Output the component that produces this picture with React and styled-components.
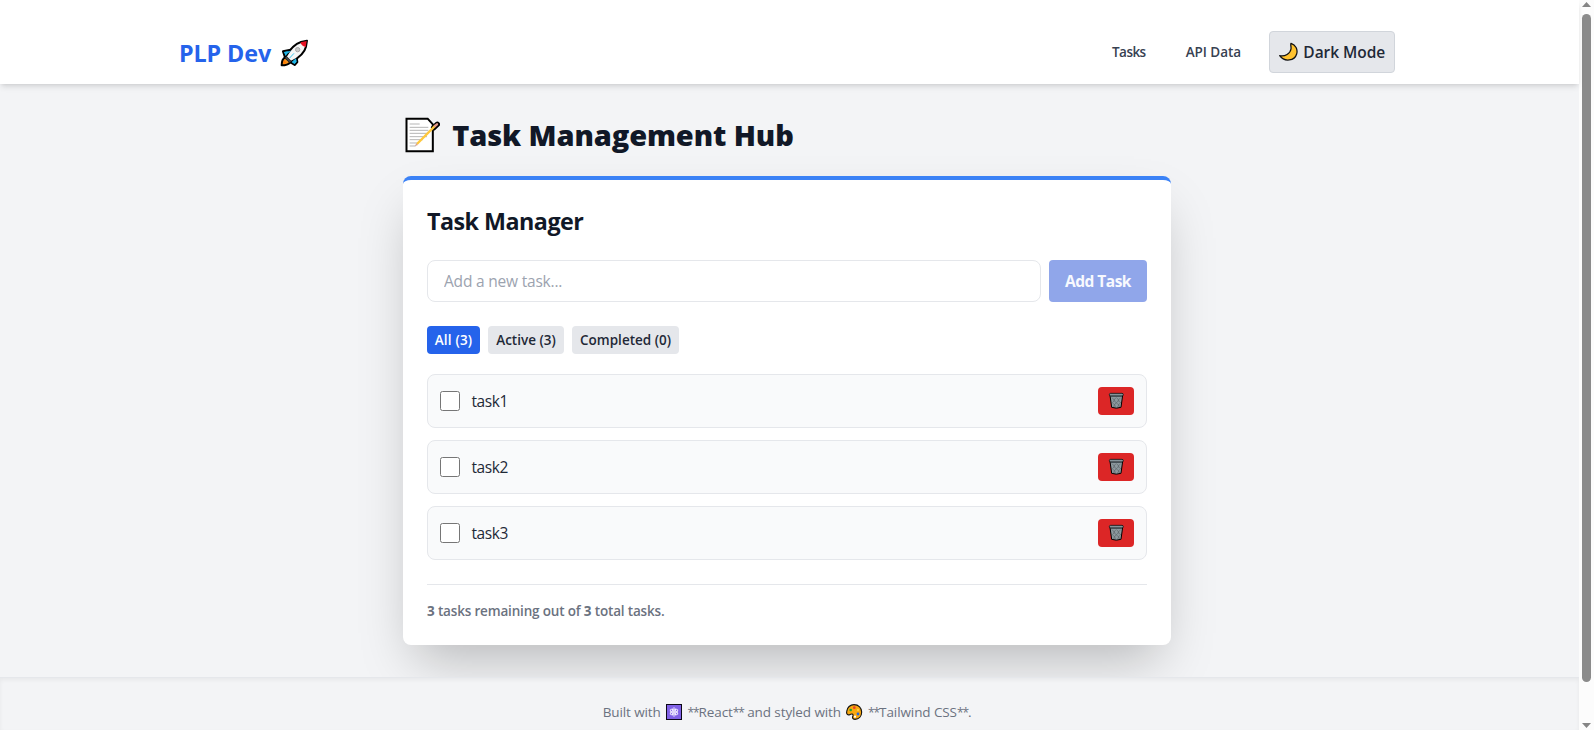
import React, { useState } from 'react';
import styled, { createGlobalStyle } from 'styled-components';

const GlobalStyle = createGlobalStyle`
  *, *::before, *::after { box-sizing: border-box; }
  body {
    margin: 0;
    background: #f3f4f6;
    color: #1f2937;
    font-family: "Segoe UI", "Open Sans", "Noto Sans", sans-serif;
    overflow: hidden;
  }
  h1, h2, p, ul { margin: 0; padding: 0; }
  button, input { font-family: inherit; }
`;

const Window = styled.div`
  display: flex;
  height: 730px;
  overflow: hidden;
`;

const Page = styled.div`
  flex: 1;
  min-width: 0;
  display: flex;
  flex-direction: column;
`;

const Header = styled.header`
  position: relative;
  flex: none;
  height: 84px;
  padding: 31px 5px 11px 0;
  background: #fff;
  box-shadow: 0 4px 6px -1px rgba(0, 0, 0, 0.1), 0 2px 4px -2px rgba(0, 0, 0, 0.1);
`;

const HeaderInner = styled.div`
  max-width: 1280px;
  margin: 0 auto;
  padding: 0 32px;
  display: flex;
  align-items: center;
  justify-content: space-between;
`;

const Logo = styled.div`
  display: flex;
  align-items: center;
  gap: 8.6px;
  padding-top: 2px;
  color: #2563eb;
  font-size: 23.3px;
  font-weight: 700;
  line-height: 32px;
  letter-spacing: -0.1px;
`;

const Nav = styled.nav`
  display: flex;
  align-items: center;
  gap: 16px;
`;

const NavLink = styled.a`
  padding: 0 12px;
  color: #374151;
  font-size: 13.5px;
  font-weight: 600;
  line-height: 20px;
  letter-spacing: ${(p) => p.$tracking || '0'};
  cursor: pointer;
`;

const ThemeButton = styled.button`
  display: flex;
  align-items: center;
  gap: 5px;
  width: 126px;
  height: 42px;
  padding: 0 0 0 8px;
  border: 1px solid #d1d5db;
  border-radius: 4px;
  background: #e5e7eb;
  color: #1f2937;
  font-size: 15.5px;
  font-weight: 600;
  line-height: 24px;
  letter-spacing: -0.05px;
  white-space: nowrap;
`;

const Main = styled.main`
  flex: none;
  padding: 32px 5px 32px 0;
`;

const Content = styled.div`
  width: 768px;
  margin: 0 auto;
`;

const PageTitle = styled.h1`
  display: flex;
  align-items: center;
  gap: 11.8px;
  height: 38px;
  margin: 0 0 22px 2px;
  color: #111827;
  font-size: 29px;
  font-weight: 800;
  line-height: 36px;
  letter-spacing: -0.1px;
`;

const Card = styled.section`
  padding: 24px;
  border-top: 4px solid #3b82f6;
  border-radius: 8px;
  background: #fff;
  box-shadow: 0 25px 50px -12px rgba(0, 0, 0, 0.25);
`;

const CardTitle = styled.h2`
  margin-bottom: 23px;
  padding-top: 1px;
  color: #111827;
  font-size: 23.3px;
  font-weight: 700;
  line-height: 32px;
  letter-spacing: -0.52px;
`;

const TaskForm = styled.form`
  display: flex;
  gap: 8px;
  margin-bottom: 24px;
`;

const TaskInput = styled.input`
  flex: 1;
  min-width: 0;
  height: 42px;
  padding: 0 16px;
  border: 1px solid #e5e7eb;
  border-radius: 8px;
  background: #fff;
  color: #1f2937;
  font-size: 15.5px;
  letter-spacing: -0.2px;
  &::placeholder { color: #9ca3af; }
`;

const AddButton = styled.button`
  width: 98px;
  height: 42px;
  padding: 0;
  border: 0;
  border-radius: 4px;
  background: #90a6ea;
  color: #f7f9fe;
  font-size: 15.5px;
  font-weight: 700;
  letter-spacing: -0.52px;
`;

const Filters = styled.div`
  display: flex;
  gap: 8px;
  margin-bottom: 20px;
`;

const FilterButton = styled.button`
  width: ${(p) => p.$width};
  height: 28px;
  padding: 0;
  border: 0;
  border-radius: 4px;
  background: ${(p) => (p.$active ? '#2563eb' : '#e5e7eb')};
  color: ${(p) => (p.$active ? '#fff' : '#1f2937')};
  font-size: 13.5px;
  font-weight: 600;
  line-height: 20px;
  letter-spacing: ${(p) => (p.$active ? '0.2px' : '0')};
  white-space: nowrap;
`;

const TaskList = styled.ul`
  display: flex;
  flex-direction: column;
  gap: 12px;
  list-style: none;
`;

const TaskRow = styled.li`
  display: flex;
  align-items: center;
  height: 54px;
  padding: 0 12px;
  border: 1px solid #e5e7eb;
  border-radius: 8px;
  background: #f9fafb;
`;

const Checkbox = styled.input`
  width: 20px;
  height: 20px;
  margin: 0 11.5px 0 0;
`;

const TaskName = styled.span`
  flex: 1;
  font-size: 15.5px;
  line-height: 24px;
  letter-spacing: -0.4px;
`;

const DeleteButton = styled.button`
  display: flex;
  align-items: center;
  justify-content: center;
  width: 36px;
  height: 28px;
  padding: 0;
  border: 0;
  border-radius: 4px;
  background: #dc2626;
`;

const Summary = styled.p`
  margin-top: 24px;
  padding-top: 16px;
  border-top: 1px solid #e5e7eb;
  color: #6b7280;
  font-size: 13.5px;
  font-weight: 600;
  line-height: 20px;
  letter-spacing: -0.17px;
`;

const Count = styled.b`
  font-weight: 700;
`;

const Footer = styled.footer`
  position: relative;
  flex: 1;
  display: flex;
  justify-content: center;
  align-items: flex-start;
  gap: 5.4px;
  padding: 24px 5px 0 0;
  border-top: 1px solid #e5e7eb;
  background: #f3f4f6;
  box-shadow: inset 0 2px 4px rgba(0, 0, 0, 0.05);
  color: #6b7280;
  font-size: 13.5px;
  line-height: 20px;
  white-space: nowrap;
`;

const FooterText = styled.span`
  letter-spacing: -0.1px;
`;

const Stars = styled.span`
  font-size: 12px;
  line-height: 1;
  letter-spacing: -1.1px;
`;

const FooterIcon = styled.span`
  display: flex;
  padding-top: 2px;
`;

const ScrollTrack = styled.div`
  flex: none;
  width: 15px;
  display: flex;
  flex-direction: column;
  align-items: center;
  padding: 2px 0;
  background: #fcfcfc;
`;

const ScrollThumb = styled.div`
  width: 9px;
  height: 668px;
  margin: 7px 0 auto;
  border-radius: 5px;
  background: #8b8b8b;
`;

const Arrow = styled.div`
  width: 9px;
  height: 5px;
  background: #858585;
  clip-path: ${(p) => (p.$down ? 'polygon(0 0, 100% 0, 50% 100%)' : 'polygon(50% 0, 100% 100%, 0 100%)')};
`;

const Rocket = () => (
  <svg width="28.67" height="28" viewBox="358 58 86 84">
    <g stroke="#000" strokeWidth="6" strokeLinejoin="round">
      <path d="M373 113Q363 119 363 137Q381 137 389 128Z" fill="#f7941e" />
      <path d="M390 90L367 95L373 113L382 116Z" fill="#1fb6e8" />
      <path d="M408 113L410 127L402 136L387 127L386 120Z" fill="#1fb6e8" />
      <path d="M439 63L421 67C402 73 387 90 375 111L391 127C414 115 432 98 436 81Z" fill="#f6f6f6" />
    </g>
    <path d="M392 93L370 97L375 109L380 102ZM406 116L408 126L402 133L393 127Z" fill="#1fb6e8" />
    <path d="M438 64L420 68Q421 79 435 82Z" fill="#e81224" />
    <path d="M378 110L392 124L387 129L373 115Z" fill="#454545" />
    <path d="M370 120L367 133L378 130Z" fill="#ff7a00" />
    <path d="M387 115L400 101" stroke="#38c5ed" strokeWidth="3" />
    <circle cx="411" cy="90" r="6.5" fill="#c9c9c9" stroke="#a7a7a7" strokeWidth="3" />
  </svg>
);

const Moon = () => (
  <svg width="20.33" height="20" viewBox="566 67 61 60">
    <path
      d="M605 71C619 76 626 89 622 103C616 123 586 129 571 108C587 112 603 101 605 88C606 81 603 76 605 71Z"
      fill="#ffc22e" stroke="#111" strokeWidth="3.8" strokeLinejoin="round"
    />
  </svg>
);

const Note = () => (
  <svg width="35.33" height="36" viewBox="46 52 106 108">
    <path d="M50.5 57H114L129.5 74V155H50.5Z" fill="#fff" stroke="#000" strokeWidth="6" />
    <path
      d="M60 73H90M60 83H116M60 92H116M60 101H116M60 111H112M60 120H100M60 130H86M60 139H78"
      stroke="#a6a6a6" strokeWidth="2.5"
    />
    <path d="M132 84L143 74" stroke="#000" strokeWidth="16" strokeLinecap="round" />
    <path d="M82 133L137 78" stroke="#ffc83d" strokeWidth="7" />
    <path d="M136 79L142 74" stroke="#e39a8a" strokeWidth="7" strokeLinecap="round" />
    <path d="M75 140L80 131L85 136Z" fill="#d9a38f" />
  </svg>
);

const Trash = () => (
  <svg width="16.67" height="17.33" viewBox="262 457 50 52">
    <path d="M268 467L273 503Q287 508 301 503L306 467Z" fill="#8c999e" stroke="#000" strokeWidth="3" strokeLinejoin="round" />
    <path
      d="M274 474L282 482L275 489L283 497L277 503M286 474L279 482L287 489L280 497L287 504M288 474L295 482L287 489L295 497L288 504M300 474L292 482L300 489L292 497L299 502"
      fill="none" stroke="#4c565a" strokeWidth="1.5"
    />
    <rect x="266" y="461" width="42" height="8" rx="4" fill="#84949a" stroke="#111" strokeWidth="2.5" />
    <path d="M270 470H304" stroke="#35464d" strokeWidth="2" />
  </svg>
);

const Atom = () => (
  <svg width="16" height="16" viewBox="0 0 48 48">
    <rect width="48" height="48" fill="#0b0716" />
    <rect x="3" y="3" width="42" height="42" fill="#8061e6" />
    <g fill="none" stroke="#f3efff" strokeWidth="2.6">
      <ellipse cx="24" cy="24" rx="13" ry="5.5" transform="rotate(90 24 24)" />
      <ellipse cx="24" cy="24" rx="13" ry="5.5" transform="rotate(30 24 24)" />
      <ellipse cx="24" cy="24" rx="13" ry="5.5" transform="rotate(150 24 24)" />
    </g>
    <circle cx="24" cy="24" r="3" fill="#fff" />
  </svg>
);

const Palette = () => (
  <svg width="16.33" height="16" viewBox="768 132 49 48">
    <path
      d="M792 134C806 134 815 144 815 156C815 170 806 178 795 178C786 178 787 171 789 167C790 162 785 160 779 164C773 166 769 162 770 155C771 142 781 134 792 134Z"
      fill="#f9a810" stroke="#111" strokeWidth="3.4"
    />
    <circle cx="793" cy="143" r="4" fill="#e8402a" />
    <circle cx="782" cy="150" r="4" fill="#1ca33b" />
    <circle cx="804" cy="150" r="3.5" fill="#ffcf42" />
    <circle cx="804" cy="162" r="4.2" fill="#2767d9" />
    <circle cx="795" cy="170" r="3.2" fill="#fff" />
  </svg>
);

const tasks = ['task1', 'task2', 'task3'];
const filters = [
  { label: 'All (3)', width: '53px' },
  { label: 'Active (3)', width: '76px' },
  { label: 'Completed (0)', width: '107px' },
];

export default function App() {
  const [filter, setFilter] = useState('All (3)');
  return (
    <>
      <GlobalStyle />
      <Window>
        <Page>
          <Header>
            <HeaderInner>
              <Logo>PLP Dev <Rocket /></Logo>
              <Nav>
                <NavLink $tracking="-0.55px">Tasks</NavLink>
                <NavLink $tracking="-0.05px">API Data</NavLink>
                <ThemeButton><Moon />Dark Mode</ThemeButton>
              </Nav>
            </HeaderInner>
          </Header>
          <Main>
            <Content>
              <PageTitle><Note />Task Management Hub</PageTitle>
              <Card>
                <CardTitle>Task Manager</CardTitle>
                <TaskForm onSubmit={(e) => e.preventDefault()}>
                  <TaskInput placeholder="Add a new task..." />
                  <AddButton>Add Task</AddButton>
                </TaskForm>
                <Filters>
                  {filters.map((f) => (
                    <FilterButton key={f.label} $width={f.width} $active={f.label === filter} onClick={() => setFilter(f.label)}>
                      {f.label}
                    </FilterButton>
                  ))}
                </Filters>
                <TaskList>
                  {tasks.map((name) => (
                    <TaskRow key={name}>
                      <Checkbox type="checkbox" />
                      <TaskName>{name}</TaskName>
                      <DeleteButton aria-label="Delete"><Trash /></DeleteButton>
                    </TaskRow>
                  ))}
                </TaskList>
                <Summary><Count>3</Count> tasks remaining out of <Count>3</Count> total tasks.</Summary>
              </Card>
            </Content>
          </Main>
          <Footer>
            <FooterText>Built with</FooterText>
            <FooterIcon><Atom /></FooterIcon>
            <FooterText><Stars>**</Stars>React<Stars>**</Stars> and styled with</FooterText>
            <FooterIcon><Palette /></FooterIcon>
            <FooterText><Stars>**</Stars>Tailwind CSS<Stars>**</Stars>.</FooterText>
          </Footer>
        </Page>
        <ScrollTrack>
          <Arrow />
          <ScrollThumb />
          <Arrow $down />
        </ScrollTrack>
      </Window>
    </>
  );
}
